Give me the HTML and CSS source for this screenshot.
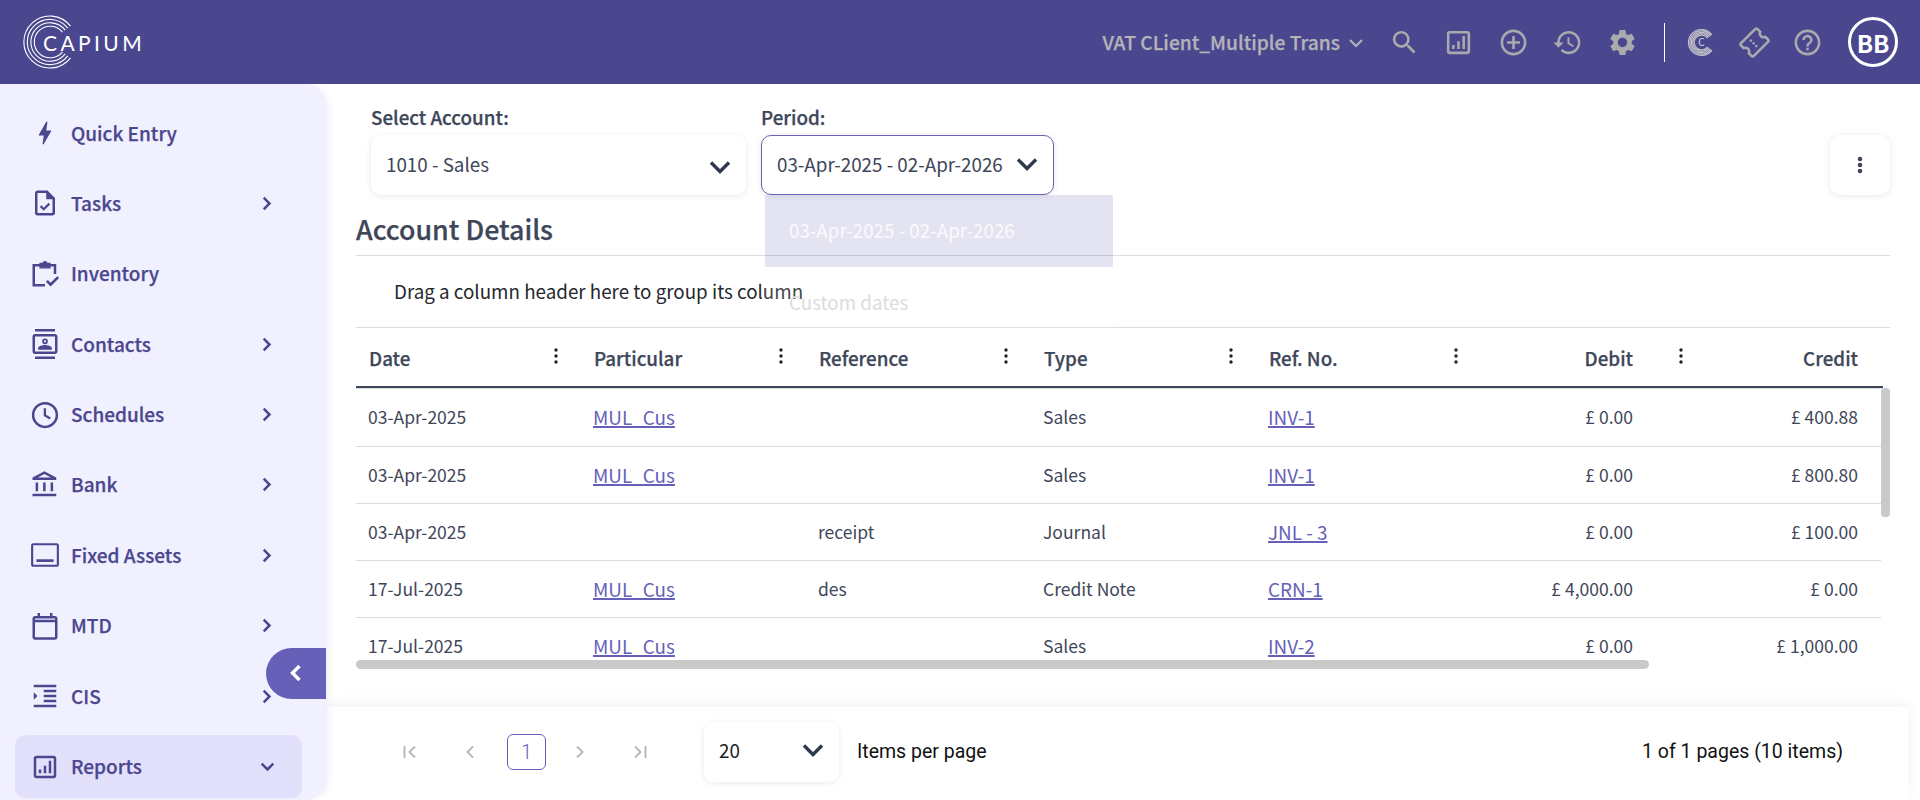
FILE: index.html
```html
<!DOCTYPE html>
<html lang="en">
<head>
  <meta charset="UTF-8" />
  <title>Capium - Account Details</title>
  <link rel="stylesheet" href="styles.css">
</head>
<body>
  <header class="topbar">
    <div class="logo">
      <svg class="logo-rings" viewBox="0 0 54 54" fill="none" stroke="#fff" stroke-width="1.1">
        <path d="M47.5 11.2A26 26 0 1 0 47.5 42.8"/>
        <path d="M44.8 13.2A22.6 22.6 0 1 0 44.8 40.8"/>
        <path d="M42.2 15.2A19.2 19.2 0 1 0 42.2 38.8"/>
        <path d="M39.5 17.2A15.8 15.8 0 1 0 39.5 36.8"/>
      </svg>
      <span class="logo-text">CAPIUM</span>
    </div>
    <div class="topbar-right">
      <span class="client">VAT CLient_Multiple Trans</span>
      <svg class="client-caret" viewBox="0 0 16 10" fill="none" stroke="currentColor" stroke-width="2"><path d="M2 2l6 6 6-6"/></svg>
      <svg class="tb-icon" viewBox="0 0 24 24"><path d="M15.500 14h-.79l-.28-.27C15.410 12.590 16 11.110 16 9.500 16 5.910 13.090 3 9.500 3S3 5.910 3 9.500 5.910 16 9.500 16c1.610 0 3.090-.59 4.230-1.570l.27.28v.79l5 4.990L20.490 19l-4.990-5zm-6 0C7.010 14 5 11.990 5 9.500S7.010 5 9.500 5 14 7.010 14 9.500 11.990 14 9.500 14z"/></svg>
      <svg class="tb-icon" viewBox="0 0 24 24"><path d="M19 3H5c-1.100 0-2 .9-2 2v14c0 1.100.9 2 2 2h14c1.100 0 2-.9 2-2V5c0-1.100-.9-2-2-2zm0 16H5V5h14v14zM7 14h2v3H7zm4-3h2v6h-2zm4-4h2v10h-2z"/></svg>
      <svg class="tb-icon" viewBox="0 0 24 24"><path d="M13 7h-2v4H7v2h4v4h2v-4h4v-2h-4V7zm-1-5C6.480 2 2 6.480 2 12s4.480 10 10 10 10-4.480 10-10S17.520 2 12 2zm0 18c-4.410 0-8-3.590-8-8s3.590-8 8-8 8 3.590 8 8-3.590 8-8 8z"/></svg>
      <svg class="tb-icon" viewBox="0 0 24 24"><path d="M13 3c-4.970 0-9 4.030-9 9H1l3.890 3.890.07.14L9 12H6c0-3.870 3.130-7 7-7s7 3.130 7 7-3.130 7-7 7c-1.930 0-3.680-.79-4.940-2.060l-1.420 1.420C8.270 19.990 10.510 21 13 21c4.970 0 9-4.030 9-9s-4.030-9-9-9zm-1 5v5l4.280 2.540.72-1.210-3.500-2.080V8H12z"/></svg>
      <svg class="tb-icon" viewBox="0 0 24 24"><path d="M19.140 12.940c.04-.3.06-.61.06-.94 0-.32-.02-.64-.07-.94l2.030-1.580c.18-.14.23-.41.12-.61l-1.920-3.320c-.12-.22-.37-.29-.59-.22l-2.390.96c-.5-.38-1.030-.7-1.620-.94l-.36-2.540c-.04-.24-.24-.41-.48-.41h-3.840c-.24 0-.43.17-.47.41l-.36 2.540c-.59.24-1.130.57-1.620.94l-2.390-.96c-.22-.08-.47 0-.59.22L2.740 8.870c-.12.21-.08.47.12.61l2.030 1.580c-.05.3-.09.63-.09.94s.02.64.07.94l-2.030 1.580c-.18.14-.23.41-.12.61l1.920 3.320c.12.22.37.29.59.22l2.390-.96c.5.38 1.030.7 1.620.94l.36 2.540c.05.24.24.41.48.41h3.840c.24 0 .44-.17.47-.41l.36-2.540c.59-.24 1.130-.56 1.620-.94l2.390.96c.22.08.47 0 .59-.22l1.920-3.320c.12-.22.07-.47-.12-.61l-2.010-1.580zM12 15.600c-1.980 0-3.600-1.620-3.600-3.600s1.620-3.600 3.600-3.600 3.600 1.620 3.600 3.600-1.620 3.600-3.600 3.600z"/></svg>
      <span class="tb-divider"></span>
      <svg class="tb-icon side rings" viewBox="0 0 31 31">
        <path d="M26 7.900A13 13 0 1 0 26 23.100"/>
        <path d="M24.900 8.700A11.600 11.600 0 1 0 24.900 22.300"/>
        <path d="M23.750 9.500A10.200 10.200 0 1 0 23.750 21.500"/>
        <path d="M22.600 10.300A8.800 8.800 0 1 0 22.600 20.700"/>
        <path d="M21.500 11.150A7.400 7.400 0 1 0 21.500 19.850"/>
        <text x="15.500" y="19" text-anchor="middle">C</text>
      </svg>
      <svg class="tb-icon side" viewBox="0 0 24 24"><g transform="rotate(-45 12 12)"><path d="M22 10V6c0-1.100-.9-2-2-2H4c-1.100 0-1.990.9-1.990 2v4c1.100 0 1.990.9 1.990 2s-.89 2-2 2v4c0 1.100.9 2 2 2h16c1.100 0 2-.9 2-2v-4c-1.100 0-2-.9-2-2s.9-2 2-2zm-2-1.460c-1.190.69-2 1.990-2 3.460s.81 2.770 2 3.460V18H4v-2.540c1.190-.69 2-1.990 2-3.460 0-1.480-.8-2.770-1.990-3.460L4 6h16v2.540z"/><circle cx="11" cy="9" r="1"/><circle cx="11" cy="12" r="1"/><circle cx="11" cy="15" r="1"/></g></svg>
      <svg class="tb-icon side" viewBox="0 0 24 24"><path d="M11 18h2v-2h-2v2zm1-16C6.480 2 2 6.480 2 12s4.480 10 10 10 10-4.480 10-10S17.520 2 12 2zm0 18c-4.410 0-8-3.590-8-8s3.590-8 8-8 8 3.590 8 8-3.590 8-8 8zm0-14c-2.210 0-4 1.790-4 4h2c0-1.100.9-2 2-2s2 .9 2 2c0 2-3 1.750-3 5h2c0-2.250 3-2.500 3-5 0-2.210-1.790-4-4-4z"/></svg>
      <div class="avatar">BB</div>
    </div>
  </header>

  <div class="layout">
    <nav class="sidebar">
      <a class="nav-item">
        <svg class="nav-icon" viewBox="0 0 24 24"><path d="M11 21h-1l1-7H7.500c-.58 0-.57-.32-.38-.66l.07-.12C8.480 10.940 10.420 7.540 13 3h1l-1 7h3.500c.49 0 .56.33.47.51l-.07.15C12.960 17.550 11 21 11 21z"/></svg>
        <span>Quick Entry</span>
      </a>
      <a class="nav-item">
        <svg class="nav-icon" viewBox="0 0 24 24"><path d="M14 2H6c-1.100 0-2 .9-2 2v16c0 1.100.9 2 2 2h12c1.100 0 2-.9 2-2V8l-6-6zm4 18H6V4h7v5h5v11z"/><path d="M8.500 14.500l2.500 2.500 4.500-4.500" fill="none" stroke="currentColor" stroke-width="1.800"/></svg>
        <span>Tasks</span>
        <svg class="nav-caret" viewBox="0 0 12 18"><path d="M2 2l7 7-7 7"/></svg>
      </a>
      <a class="nav-item">
        <svg class="nav-icon" viewBox="0 0 24 24" fill="none" stroke="currentColor" stroke-width="2"><path d="M20 12V5h-4M8 5H3v16h9"/><path d="M8 3.500h2.500a1.500 1.500 0 0 1 3 0H16V7H8z" fill="currentColor" stroke-width="1"/><path d="M13.500 17.500l3 3 6-6" stroke-width="2.200"/></svg>
        <span>Inventory</span>
      </a>
      <a class="nav-item">
        <svg class="nav-icon" viewBox="0 0 24 24"><path d="M20 0H4v2h16V0zM4 24h16v-2H4v2zM20 4H4c-1.100 0-2 .9-2 2v12c0 1.100.9 2 2 2h16c1.100 0 2-.9 2-2V6c0-1.100-.9-2-2-2zm0 14H4V6h16v12z"/><path d="M12 7.500a2.300 2.300 0 1 1 0 4.600 2.300 2.300 0 0 1 0-4.600zm0 1.400a.9.9 0 1 0 0 1.800.9.9 0 0 0 0-1.800zM6.500 16.500v-1.200c0-1.800 3.600-2.500 5.500-2.500s5.500.7 5.500 2.500v1.200z"/></svg>
        <span>Contacts</span>
        <svg class="nav-caret" viewBox="0 0 12 18"><path d="M2 2l7 7-7 7"/></svg>
      </a>
      <a class="nav-item">
        <svg class="nav-icon" viewBox="0 0 24 24"><path d="M12 1.500a10.500 10.500 0 1 0 0 21 10.500 10.500 0 0 0 0-21zm0 19a8.500 8.500 0 1 1 0-17 8.500 8.500 0 0 1 0 17z"/><path d="M11 6.500h1.800v5.200l3.800 2.300-.9 1.500-4.700-2.800z"/></svg>
        <span>Schedules</span>
        <svg class="nav-caret" viewBox="0 0 12 18"><path d="M2 2l7 7-7 7"/></svg>
      </a>
      <a class="nav-item">
        <svg class="nav-icon" viewBox="0 0 24 24"><path d="M6.500 10h-2v7h2v-7zm6 0h-2v7h2v-7zm8.500 9H2v2h19v-2zm-2.500-9h-2v7h2v-7zm-7-6.740L16.710 6H6.290l5.210-2.740m0-2.260L2 6v2h19V6l-9.500-5z"/></svg>
        <span>Bank</span>
        <svg class="nav-caret" viewBox="0 0 12 18"><path d="M2 2l7 7-7 7"/></svg>
      </a>
      <a class="nav-item">
        <svg class="nav-icon" viewBox="0 0 28 24"><path d="M25 1H3C1.900 1 1 1.900 1 3v18c0 1.100.9 2 2 2h22c1.100 0 2-.9 2-2V3c0-1.100-.9-2-2-2zm0 20H3V3h22v18z"/><path d="M6 16h16v2.500H6z"/></svg>
        <span>Fixed Assets</span>
        <svg class="nav-caret" viewBox="0 0 12 18"><path d="M2 2l7 7-7 7"/></svg>
      </a>
      <a class="nav-item">
        <svg class="nav-icon" viewBox="0 0 24 24"><path d="M20 4h-2V1.500h-2V4H8V1.500H6V4H4c-1.100 0-2 .9-2 2v15c0 1.100.9 2 2 2h16c1.100 0 2-.9 2-2V6c0-1.100-.9-2-2-2zm0 17H4V9h16v12zM4 7V6h16v1z"/></svg>
        <span>MTD</span>
        <svg class="nav-caret" viewBox="0 0 12 18"><path d="M2 2l7 7-7 7"/></svg>
      </a>
      <a class="nav-item">
        <svg class="nav-icon" viewBox="0 0 24 24"><path d="M3 21h18v-2H3v2zM3 9v6l3-3-3-3zm8 8h10v-2H11v2zM3 3v2h18V3H3zm8 6h10V7H11v2zm0 4h10v-2H11v2z"/></svg>
        <span>CIS</span>
        <svg class="nav-caret" viewBox="0 0 12 18"><path d="M2 2l7 7-7 7"/></svg>
      </a>
      <a class="nav-item active">
        <svg class="nav-icon" viewBox="0 0 24 24"><path d="M19 3H5c-1.100 0-2 .9-2 2v14c0 1.100.9 2 2 2h14c1.100 0 2-.9 2-2V5c0-1.100-.9-2-2-2zm0 16H5V5h14v14zM7 14h2v3H7zm4-3h2v6h-2zm4-4h2v10h-2z"/></svg>
        <span>Reports</span>
        <svg class="nav-caret down" viewBox="0 0 18 12"><path d="M2 2l7 7 7-7"/></svg>
      </a>
      <button class="collapse-btn">
        <svg viewBox="0 0 12 18"><path d="M10 2L3 9l7 7"/></svg>
      </button>
    </nav>

    <main class="main">
      <div class="toolbar">
        <div class="field account">
          <label>Select Account:</label>
          <div class="select">
            <span>1010 - Sales</span>
            <svg class="chev" viewBox="0 0 22 14"><path d="M2 2.500l9 9 9-9"/></svg>
          </div>
        </div>
        <div class="field period">
          <label>Period:</label>
          <div class="select focused">
            <span>03-Apr-2025 - 02-Apr-2026</span>
            <svg class="chev" viewBox="0 0 22 14"><path d="M2 2.500l9 9 9-9"/></svg>
          </div>
          <ul class="dropdown">
            <li class="selected">03-Apr-2025 - 02-Apr-2026</li>
            <li>Custom dates</li>
          </ul>
        </div>
        <button class="more-btn">
          <svg viewBox="0 0 6 18"><circle cx="3" cy="3" r="2.300"/><circle cx="3" cy="9" r="2.300"/><circle cx="3" cy="15" r="2.300"/></svg>
        </button>
      </div>

      <section class="details">
        <h2>Account Details</h2>
        <div class="group-panel">Drag a column header here to group its column</div>

        <div class="grid">
          <div class="grid-head">
            <div class="th"><span>Date</span><svg class="dots" viewBox="0 0 4 16"><circle cx="2" cy="2" r="1.700"/><circle cx="2" cy="8" r="1.700"/><circle cx="2" cy="14" r="1.700"/></svg></div>
            <div class="th"><span>Particular</span><svg class="dots" viewBox="0 0 4 16"><circle cx="2" cy="2" r="1.700"/><circle cx="2" cy="8" r="1.700"/><circle cx="2" cy="14" r="1.700"/></svg></div>
            <div class="th"><span>Reference</span><svg class="dots" viewBox="0 0 4 16"><circle cx="2" cy="2" r="1.700"/><circle cx="2" cy="8" r="1.700"/><circle cx="2" cy="14" r="1.700"/></svg></div>
            <div class="th"><span>Type</span><svg class="dots" viewBox="0 0 4 16"><circle cx="2" cy="2" r="1.700"/><circle cx="2" cy="8" r="1.700"/><circle cx="2" cy="14" r="1.700"/></svg></div>
            <div class="th"><span>Ref. No.</span><svg class="dots" viewBox="0 0 4 16"><circle cx="2" cy="2" r="1.700"/><circle cx="2" cy="8" r="1.700"/><circle cx="2" cy="14" r="1.700"/></svg></div>
            <div class="th num"><span>Debit</span><svg class="dots" viewBox="0 0 4 16"><circle cx="2" cy="2" r="1.700"/><circle cx="2" cy="8" r="1.700"/><circle cx="2" cy="14" r="1.700"/></svg></div>
            <div class="th num"><span>Credit</span></div>
          </div>
          <div class="grid-body">
            <div class="row"><div>03-Apr-2025</div><div><a>MUL_Cus</a></div><div></div><div>Sales</div><div><a>INV-1</a></div><div class="num">£ 0.00</div><div class="num">£ 400.88</div></div>
            <div class="row"><div>03-Apr-2025</div><div><a>MUL_Cus</a></div><div></div><div>Sales</div><div><a>INV-1</a></div><div class="num">£ 0.00</div><div class="num">£ 800.80</div></div>
            <div class="row"><div>03-Apr-2025</div><div></div><div>receipt</div><div>Journal</div><div><a>JNL - 3</a></div><div class="num">£ 0.00</div><div class="num">£ 100.00</div></div>
            <div class="row"><div>17-Jul-2025</div><div><a>MUL_Cus</a></div><div>des</div><div>Credit Note</div><div><a>CRN-1</a></div><div class="num">£ 4,000.00</div><div class="num">£ 0.00</div></div>
            <div class="row"><div>17-Jul-2025</div><div><a>MUL_Cus</a></div><div></div><div>Sales</div><div><a>INV-2</a></div><div class="num">£ 0.00</div><div class="num">£ 1,000.00</div></div>
            <div class="scroll-x"></div>
            <div class="scroll-y"></div>
          </div>
        </div>
      </section>

      <footer class="pager">
        <div class="pager-nav">
          <svg viewBox="0 0 16 16"><path d="M2.500 2v12M13 2.500L7.500 8l5.500 5.500"/></svg>
          <svg viewBox="0 0 16 16"><path d="M11 2.500L5.500 8l5.500 5.500"/></svg>
          <span class="page-num">1</span>
          <svg viewBox="0 0 16 16"><path d="M5 2.500L10.500 8 5 13.500"/></svg>
          <svg viewBox="0 0 16 16"><path d="M13.500 2v12M3 2.500L8.500 8 3 13.500"/></svg>
        </div>
        <div class="select page-size">
          <span>20</span>
          <svg class="chev" viewBox="0 0 22 14"><path d="M2 2.500l9 9 9-9"/></svg>
        </div>
        <span class="per-page">Items per page</span>
        <span class="page-info">1 of 1 pages (10 items)</span>
      </footer>
    </main>
  </div>
</body>
</html>
```

FILE: styles.css
```css
* {
  box-sizing: border-box;
}
body {
  margin: 0;
  height: 800px;
  overflow: hidden;
  background: white;
  color: #3e4659;
  font-family: 'Noto Sans CJK SC', 'Noto Sans', sans-serif;
  font-size: 18.8px;
}
svg {
  display: block;
  flex: none;
}
/* the font has no 600 cut, so the medium gets a hairline stroke */
.client, .sidebar, .field label, .details h2, .grid-head {
  font-weight: 500;
  -webkit-text-stroke: 0.25px currentColor;
}

/* top bar */
.topbar {
  height: 84px;
  background: #4b478f;
  display: flex;
  align-items: center;
  justify-content: space-between;
  padding: 0 22px 0 23px;
}
.logo {
  display: flex;
  align-items: center;
}
.logo-rings {
  width: 54px;
  height: 54px;
}
.logo-text {
  margin-left: -34px;
  color: white;
  font-family: 'Lato', sans-serif;
  font-size: 21px;
  letter-spacing: 3.400px;
}
.topbar-right {
  display: flex;
  align-items: center;
  color: #b4b3b7;
}
.client {
  font-size: 19.200px;
}
.client-caret {
  width: 16px;
  height: 10px;
  margin: 2px 25px 0 8px;
}
.tb-icon {
  width: 31px;
  height: 31px;
  fill: #aaa9ad;
  margin-right: 23.400px;
}
.tb-icon.side {
  margin-right: 22px;
}
.rings {
  fill: none;
  stroke: #c4c3c9;
  stroke-width: 1.200;
}
.rings text {
  fill: #d5d4da;
  stroke: none;
  font-size: 10px;
}
.tb-divider {
  width: 1px;
  height: 39px;
  background: white;
  margin: 0 21px 0 3px;
}
.avatar {
  width: 50px;
  height: 50px;
  margin-left: 3px;
  border: 3px solid white;
  border-radius: 50%;
  color: white;
  font-size: 24px;
  font-weight: 700;
  display: flex;
  align-items: center;
  justify-content: center;
}

.layout {
  display: flex;
  height: 716px;
}

/* sidebar */
.sidebar {
  position: relative;
  width: 327px;
  flex: none;
  padding: 17.500px 25px 0 15px;
  background: #f1f0fe;
  border-radius: 0 22px 22px 0;
  box-shadow: 2px 0 6px rgba(75, 71, 143, 0.06);
  color: #4b478f;
  font-size: 19px;
}
.nav-item {
  display: flex;
  align-items: center;
  height: 63px;
  margin-bottom: 7.400px;
  padding: 0 30px 0 15px;
  border-radius: 10px;
}
.nav-item span {
  padding-bottom: 2px;
}
.nav-item.active {
  background: #e3e0fb;
}
.nav-icon {
  width: 30px;
  height: 30px;
  fill: currentColor;
  margin-right: 11px;
}
.nav-icon[fill='none'] {
  fill: none;
}
.nav-caret {
  width: 10px;
  height: 15px;
  margin-left: auto;
  fill: none;
  stroke: currentColor;
  stroke-width: 3;
}
.nav-caret.down {
  width: 15px;
  height: 10px;
  margin-right: -3px;
}
.collapse-btn {
  position: absolute;
  top: 563.500px;
  right: 1px;
  width: 60px;
  height: 51px;
  border: none;
  padding: 0 0 0 23px;
  background: #6660b8;
  border-radius: 26px 0 0 26px;
}
.collapse-btn svg {
  width: 13px;
  height: 18px;
  fill: none;
  stroke: white;
  stroke-width: 3.400;
}

/* main */
.main {
  flex: 1;
  min-width: 0;
  display: flex;
  flex-direction: column;
}
.toolbar {
  height: 111px;
  padding: 0 30px 0 44px;
  display: flex;
  align-items: flex-end;
  gap: 15px;
}
.field {
  position: relative;
}
.field label {
  display: block;
  margin-bottom: 6px;
  line-height: 24px;
}
.select {
  height: 60px;
  padding: 0 15px;
  background: white;
  border-radius: 10px;
  box-shadow: 0 1px 6px rgba(0, 0, 0, 0.09);
  display: flex;
  align-items: center;
  justify-content: space-between;
}
.select span {
  padding-bottom: 4px;
}
.account .select {
  width: 375px;
}
.period .select {
  width: 293px;
}
.select.focused {
  border: 1px solid #6660b8;
}
.chev {
  width: 22px;
  height: 14px;
  margin-top: 4px;
  fill: none;
  stroke: #2f3a4f;
  stroke-width: 3.400;
}
.focused .chev {
  margin: 0 0 2px;
}
.page-size .chev {
  margin: 0 0 3px;
}
.dropdown {
  position: absolute;
  top: 100%;
  left: 4px;
  width: 348px;
  margin: 0;
  padding: 0;
  list-style: none;
  z-index: 5;
}
.dropdown li {
  height: 72px;
  padding: 0 0 3px 24px;
  display: flex;
  align-items: center;
  background: rgba(255, 255, 255, 0.15);
  color: #dcdcdc;
}
.dropdown li.selected {
  background: rgba(80, 80, 170, 0.16);
  color: rgba(255, 255, 255, 0.85);
}
.more-btn {
  width: 60px;
  height: 60px;
  margin-left: auto;
  border: none;
  padding: 0;
  background: white;
  border-radius: 10px;
  box-shadow: 0 1px 6px rgba(0, 0, 0, 0.1);
  display: flex;
  align-items: center;
  justify-content: center;
}
.more-btn svg {
  width: 6px;
  height: 18px;
  fill: #3e4659;
}

/* grid */
.details {
  margin: 0 30px 0 29px;
}
.details h2 {
  margin: 0;
  height: 61px;
  padding-top: 15px;
  border-bottom: 1px solid #dcdcdf;
  font-size: 26.800px;
  line-height: 38px;
}
.group-panel {
  height: 72px;
  padding: 0 0 2px 38px;
  display: flex;
  align-items: center;
  border-bottom: 1px solid #dcdcdf;
  color: #25282e;
}
.grid {
  position: relative;
}
.grid-head, .row {
  display: grid;
  grid-template-columns: repeat(7, 225px);
  overflow: hidden;
}
.grid-head {
  width: 1527px;
  height: 60px;
  border-bottom: 2px solid #3e4659;
  box-shadow: 0 1px 0 #dcdcdf;
}
.th {
  display: flex;
  align-items: center;
  justify-content: space-between;
  padding: 0 23px 0 13px;
}
.th.num {
  justify-content: flex-end;
  padding-right: 23px;
}
.th.num .dots {
  margin-left: 46px;
}
.th.num:last-child {
  padding-right: 73px;
}
.dots {
  width: 4px;
  height: 16px;
  margin-top: -2px;
  fill: #222;
}
.grid-body {
  position: relative;
  height: 281px;
  overflow: hidden;
  font-size: 17.500px;
}
.row {
  width: 1525px;
  height: 57px;
  align-items: center;
  padding-bottom: 2px;
  border-bottom: 1px solid #dcdcdf;
}
.row:nth-child(1) {
  height: 59px;
}
.row > div {
  padding: 0 12px;
}
.row > .num {
  padding-right: 73px;
  text-align: right;
}
.row a {
  color: #6660b8;
  font-size: 18.900px;
  vertical-align: -1px;
  text-decoration: underline;
  text-decoration-thickness: 1.500px;
}
.scroll-x {
  position: absolute;
  left: 0;
  bottom: 0;
  width: 1293px;
  height: 9px;
  background: #c9c9c9;
  border-radius: 5px;
}
.scroll-y {
  position: absolute;
  top: 0;
  right: 0;
  width: 9px;
  height: 129px;
  background: #c9c9c9;
  border-radius: 4px;
}

/* pager */
.pager {
  margin-top: auto;
  width: 1581px;
  height: 93px;
  padding: 0 65px 4px 75px;
  background: white;
  box-shadow: 0 -4px 14px rgba(0, 0, 0, 0.05);
  display: flex;
  align-items: center;
  font-family: 'Roboto', sans-serif;
  color: #111;
}
.pager-nav {
  display: flex;
  align-items: center;
  width: 302px;
  color: #b5b5b5;
}
.pager-nav svg {
  width: 16px;
  height: 16px;
  fill: none;
  stroke: #b5b5b5;
  stroke-width: 1.800;
  margin-right: 44px;
}
.page-num {
  width: 39px;
  height: 36px;
  margin: 0 26px 0 -15px;
  border: 1px solid #6660b8;
  border-radius: 6px;
  color: #6660b8;
  display: flex;
  align-items: center;
  justify-content: center;
  font-size: 20px;
  font-weight: 300;
}
.page-size {
  width: 135px;
  font-family: 'Noto Sans CJK SC', sans-serif;
  color: #222;
  margin-right: 18px;
}
.per-page {
  font-size: 19.500px;
}
.page-info {
  margin-left: auto;
  font-size: 19.500px;
}
```
